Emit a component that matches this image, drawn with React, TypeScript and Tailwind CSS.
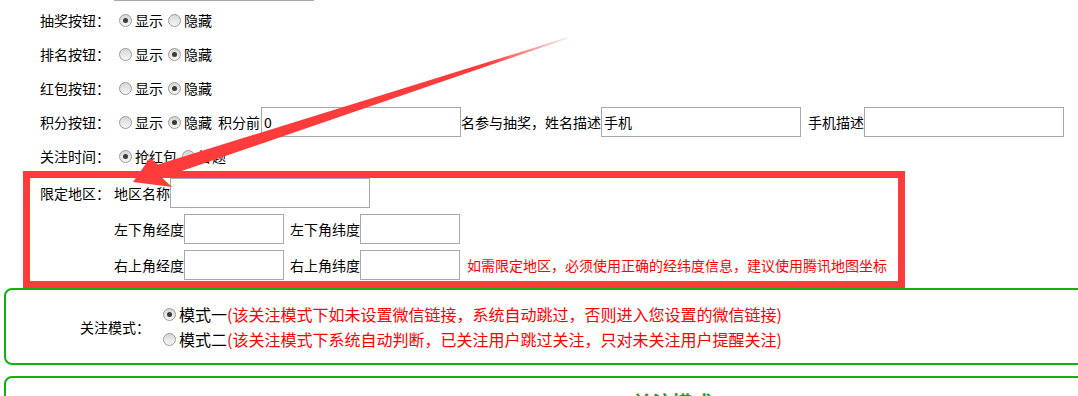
import React from 'react';

function Radio({ checked = false }: { checked?: boolean }) {
  return (
    <span className="relative inline-flex h-[13px] w-[13px] shrink-0 items-center justify-center rounded-full border border-[#9a9a9a] bg-linear-to-b from-[#d6d6d6] to-[#f7f7f7]">
      {checked && <span className="h-[5px] w-[5px] rounded-full bg-[#3a3a3a]" />}
    </span>
  );
}

function Option({ label, checked, last }: { label: string; checked?: boolean; last?: boolean }) {
  return (
    <label className="flex items-center">
      <Radio checked={checked} />
      <span className={last ? 'ml-[3px]' : 'ml-[3px] mr-[5px]'}>{label}</span>
    </label>
  );
}

function Field({ width, value }: { width: string; value?: string }) {
  return (
    <div className={`${width} flex h-[30px] shrink-0 items-center border border-[#a9a9a9] bg-white px-[2px]`}>
      {value}
    </div>
  );
}

const toggles = [
  { name: '抽奖按钮：', show: true },
  { name: '排名按钮：', show: false },
  { name: '红包按钮：', show: false },
];

const modes = [
  { name: '模式一', note: '(该关注模式下如未设置微信链接，系统自动跳过，否则进入您设置的微信链接)', checked: true },
  { name: '模式二', note: '(该关注模式下系统自动判断，已关注用户跳过关注，只对未关注用户提醒关注)', checked: false },
];

export default function App() {
  return (
    <div className="relative h-[396px] w-[1078px] overflow-hidden bg-white font-['Noto_Sans_CJK_SC','Noto_Sans',sans-serif] text-[14px] leading-none text-black">
      <div className="ml-[114px] h-px w-[200px] bg-[#a9a9a9]" />

      <div className="mt-[2px]">
        {toggles.map((t) => (
          <div key={t.name} className="flex h-[34px] items-center pl-[40px]">
            <span className="w-[79px] shrink-0">{t.name}</span>
            <Option label="显示" checked={t.show} />
            <Option label="隐藏" checked={!t.show} last />
          </div>
        ))}

        <div className="flex h-[34px] items-center pl-[40px]">
          <span className="w-[79px] shrink-0">积分按钮：</span>
          <Option label="显示" />
          <Option label="隐藏" checked last />
          <span className="ml-[6px]">积分前</span>
          <div className="ml-[1px]">
            <Field width="w-[200px]" value="0" />
          </div>
          <span>名参与抽奖，姓名描述</span>
          <Field width="w-[200px]" value="手机" />
          <span className="ml-[7px]">手机描述</span>
          <Field width="w-[200px]" />
        </div>

        <div className="flex h-[34px] items-center pl-[40px]">
          <span className="w-[79px] shrink-0">关注时间：</span>
          <Option label="抢红包" checked />
          <Option label="答题" last />
        </div>
      </div>

      <div className="relative flex pl-[40px] pt-[5px]">
        <div className="flex h-[30px] w-[74px] shrink-0 items-center">限定地区：</div>
        <div className="flex flex-col gap-[6px]">
          <div className="flex items-center">
            <span>地区名称</span>
            <Field width="w-[200px]" />
          </div>
          <div className="flex items-center">
            <span>左下角经度</span>
            <Field width="w-[100px]" />
            <span className="ml-[6px]">左下角纬度</span>
            <Field width="w-[100px]" />
          </div>
          <div className="flex items-center">
            <span>右上角经度</span>
            <Field width="w-[100px]" />
            <span className="ml-[6px]">右上角纬度</span>
            <Field width="w-[100px]" />
            <span className="ml-[7px] text-[#ff0000]">如需限定地区，必须使用正确的经纬度信息，建议使用腾讯地图坐标</span>
          </div>
        </div>
        <div className="pointer-events-none absolute left-[23px] top-[-2px] h-[117px] w-[882px] border-[7px] border-[#ff3b3b]" />
      </div>

      <div className="ml-[4px] mt-[8px] flex h-[77px] w-[1090px] items-center rounded-[8px] border-2 border-[#0cb40c] pl-[74px]">
        <span className="w-[83px] shrink-0">关注模式：</span>
        <div className="flex flex-col text-[16px]">
          {modes.map((m) => (
            <div key={m.name} className="flex h-[25px] items-center">
              <Radio checked={m.checked} />
              <span className="ml-[3px]">{m.name}</span>
              <span className="text-[#ff0000]">{m.note}</span>
            </div>
          ))}
        </div>
      </div>

      <div className="ml-[4px] mt-[11px] h-[80px] w-[1090px] rounded-[8px] border-2 border-[#0cb40c] pl-[626px] pt-[15px]">
        <span className="text-[20px] font-bold text-[#12a812]">关注模式</span>
      </div>

      <svg className="pointer-events-none absolute left-0 top-0" width="1078" height="396" viewBox="0 0 1078 396">
        <defs>
          <linearGradient id="fade" gradientUnits="userSpaceOnUse" x1="567" y1="38" x2="133" y2="182">
            <stop offset="0" stopColor="#ff3b3b" stopOpacity="0.15" />
            <stop offset="0.18" stopColor="#ff3b3b" stopOpacity="1" />
            <stop offset="1" stopColor="#ff3b3b" stopOpacity="1" />
          </linearGradient>
        </defs>
        <polygon
          fill="url(#fade)"
          points="567,37.6 158,164.5 150,158 133,182 172,187 162,177.8 567,38.8"
        />
      </svg>
    </div>
  );
}
